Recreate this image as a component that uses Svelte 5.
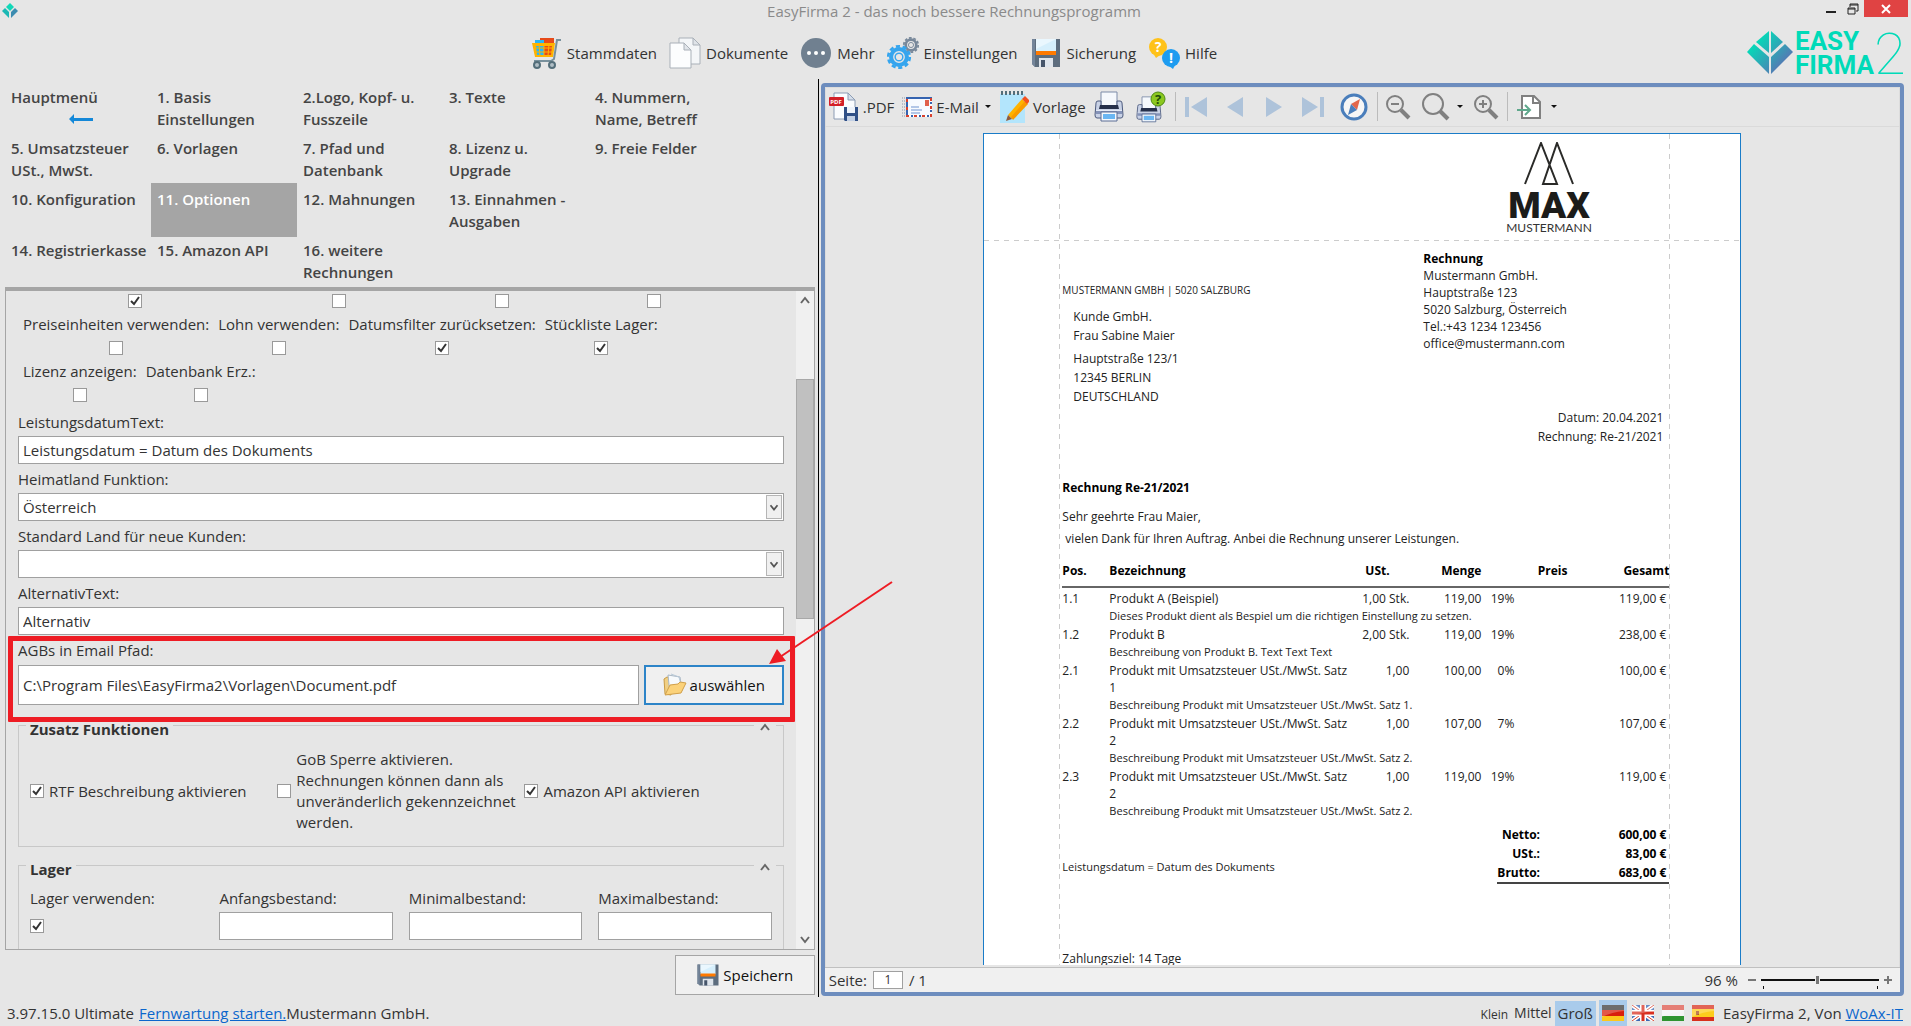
<script lang="ts">
  type Option = { label: string; checked: boolean };
  type Position = {
    pos: string;
    name: string;
    note: string;
    amount: string;
    price: string;
    tax: string;
    total: string;
  };

  const mainMenu = [
    { label: 'Stammdaten', icon: 'cart' },
    { label: 'Dokumente', icon: 'documents' },
    { label: 'Mehr', icon: 'more' },
    { label: 'Einstellungen', icon: 'gears' },
    { label: 'Sicherung', icon: 'floppy' },
    { label: 'Hilfe', icon: 'help' },
  ];

  const sections = [
    'Hauptmenü',
    '1. Basis Einstellungen',
    '2.Logo, Kopf- u. Fusszeile',
    '3. Texte',
    '4. Nummern, Name, Betreff',
    '5. Umsatzsteuer USt., MwSt.',
    '6. Vorlagen',
    '7. Pfad und Datenbank',
    '8. Lizenz u. Upgrade',
    '9. Freie Felder',
    '10. Konfiguration',
    '11. Optionen',
    '12. Mahnungen',
    '13. Einnahmen - Ausgaben',
    '',
    '14. Registrierkasse',
    '15. Amazon API',
    '16. weitere Rechnungen',
  ];

  let activeSection = '11. Optionen';

  let topChecks = [true, false, false, false];

  let optionRows: Option[][] = [
    [
      { label: 'Preiseinheiten verwenden:', checked: false },
      { label: 'Lohn verwenden:', checked: false },
      { label: 'Datumsfilter zurücksetzen:', checked: true },
      { label: 'Stückliste Lager:', checked: true },
    ],
    [
      { label: 'Lizenz anzeigen:', checked: false },
      { label: 'Datenbank Erz.:', checked: false },
    ],
  ];

  let extras: Option[] = [
    { label: 'RTF Beschreibung aktivieren', checked: true },
    {
      label:
        'GoB Sperre aktivieren. Rechnungen können dann als unveränderlich gekennzeichnet werden.',
      checked: false,
    },
    { label: 'Amazon API aktivieren', checked: true },
  ];

  const stockFields = ['Anfangsbestand:', 'Minimalbestand:', 'Maximalbestand:'];
  let stockEnabled = true;

  let serviceDateText = 'Leistungsdatum = Datum des Dokuments';
  let homeCountry = 'Österreich';
  let defaultCountry = '';
  let alternativeText = 'Alternativ';
  let termsPath = 'C:\\Program Files\\EasyFirma2\\Vorlagen\\Document.pdf';

  const positions: Position[] = [
    {
      pos: '1.1',
      name: 'Produkt A (Beispiel)',
      note: 'Dieses Produkt dient als Bespiel um die richtigen Einstellung zu setzen.',
      amount: '1,00 Stk.',
      price: '119,00',
      tax: '19%',
      total: '119,00 €',
    },
    {
      pos: '1.2',
      name: 'Produkt B',
      note: 'Beschreibung von Produkt B. Text Text Text',
      amount: '2,00 Stk.',
      price: '119,00',
      tax: '19%',
      total: '238,00 €',
    },
    {
      pos: '2.1',
      name: 'Produkt mit Umsatzsteuer USt./MwSt. Satz 1',
      note: 'Beschreibung Produkt mit Umsatzsteuer USt./MwSt. Satz 1.',
      amount: '1,00',
      price: '100,00',
      tax: '0%',
      total: '100,00 €',
    },
    {
      pos: '2.2',
      name: 'Produkt mit Umsatzsteuer USt./MwSt. Satz 2',
      note: 'Beschreibung Produkt mit Umsatzsteuer USt./MwSt. Satz 2.',
      amount: '1,00',
      price: '107,00',
      tax: '7%',
      total: '107,00 €',
    },
    {
      pos: '2.3',
      name: 'Produkt mit Umsatzsteuer USt./MwSt. Satz 2',
      note: 'Beschreibung Produkt mit Umsatzsteuer USt./MwSt. Satz 2.',
      amount: '1,00',
      price: '119,00',
      tax: '19%',
      total: '119,00 €',
    },
  ];

  const textSizes = ['Klein', 'Mittel', 'Groß'];
  let textSize = 'Groß';

  const languages = ['Deutsch', 'English', 'Magyar', 'Español'];
  let language = 'Deutsch';

  let page = '1';
  let zoom = 96;
</script>

{#snippet floppy()}
  <path d="M2 2h28v28H5l-3-3z" fill="#5d6d7e" />
  <path d="M2 2h3v28l-3-3z" fill="#74859a" />
  <path d="M6 2h20v13H6z" fill="#d6effc" />
  <path d="M6 2h20L6 12z" fill="#eaf7fe" />
  <path d="M6 14h20v4H6z" fill="#ff7a00" />
  <path d="M9 21h14v9H9z" fill="#dfe5ec" />
  <path d="M11 23h4v7h-4z" fill="#46556a" />
{/snippet}

{#snippet gear(cx: number, cy: number, r: number, color: string)}
  <g fill="none" stroke={color}>
    <circle {cx} {cy} r={r * 0.66} stroke-width={r * 0.34} />
    <circle {cx} {cy} r={r * 0.9} stroke-width={r * 0.22} stroke-dasharray="{r * 0.34} {r * 0.225}" />
    <circle {cx} {cy} r={r * 0.32} stroke-width={r * 0.12} />
  </g>
{/snippet}

{#snippet printer()}
  <path d="M7 1h16v14H7z" fill="#f5f8fc" stroke="#7c8ba8" />
  <path d="M2 12q0-2 2-2h3v5h16v-5h3q2 0 2 2l1 12q0 3-2 3H3q-2 0-2-3z" fill="#c9d2e6" stroke="#4d5b7e" />
  <path d="M6 14h18l1 4H5z" fill="#252f4a" />
  <path d="M2 19h26v4H2z" fill="#8593b8" />
  <path d="M2 19h26v1H2z" fill="#e4eaf6" />
  <path d="M7 21h16v9H7z" fill="#f5f8fc" stroke="#5a6d94" />
  <path d="M9 23h12v5H9z" fill="#6ab6f2" />
{/snippet}

<div class="app">
  <header class="titleBar">
    <svg class="appIcon" viewBox="0 0 16 16" aria-hidden="true">
      <path d="M8 0l4 4-4 4-4-4z" fill="#10d8b8" />
      <path d="M3 5l4 4v6L0 8z" fill="#1cb8b4" />
      <path d="M13 5l3 3-7 7V9z" fill="#3c8cb0" />
    </svg>
    <h1>EasyFirma 2 - das noch bessere Rechnungsprogramm</h1>
    <div class="windowButtons">
      <button aria-label="Minimieren">
        <svg viewBox="0 0 12 12"><path d="M1 9h10" stroke="#222" stroke-width="2" /></svg>
      </button>
      <button aria-label="Wiederherstellen">
        <svg viewBox="0 0 12 12" fill="none" stroke="#222">
          <path d="M1 5h7v6H1z" /><path d="M1 6h7" /><path d="M3 4V1h8v7H9M3 2h8" />
        </svg>
      </button>
      <button class="close" aria-label="Schließen">
        <svg viewBox="0 0 12 12"><path d="M2 2l8 8M10 2l-8 8" stroke="#fff" stroke-width="2" /></svg>
      </button>
    </div>
  </header>

  <div class="topBar">
    <nav class="mainMenu">
      {#each mainMenu as item}
        <button>
          <svg viewBox="0 0 32 32" aria-hidden="true">
            {#if item.icon === 'cart'}
              <path d="M10 1h14v6H10z" fill="#e64a19" />
              <path d="M5 3h9v6H5z" fill="#29b6f6" />
              <path d="M2 6h23l-2 14H5z" fill="#ffb300" />
              <path d="M6 9h8v9H7z" fill="#29b6f6" />
              <path d="M14 9h8l-1 9h-7z" fill="#e64a19" />
              <path d="M4 11h20M5 15h18M9 7l1 12M14 7v12M19 7l-1 12" stroke="#ffb300" stroke-width="1" />
              <path d="M31 3h-4l-3 19-3 2H4" fill="none" stroke="#78909c" stroke-width="2" />
              <circle cx="7" cy="28" r="3" fill="#b0bec5" stroke="#546e7a" stroke-width="2" />
              <circle cx="22" cy="28" r="3" fill="#b0bec5" stroke="#546e7a" stroke-width="2" />
            {:else if item.icon === 'documents'}
              <path d="M10 1h14l7 7v19H10z" fill="#f4f6f8" stroke="#a9b0b8" />
              <path d="M24 1l7 7h-7z" fill="#dfe3e8" stroke="#a9b0b8" />
              <path d="M1 6h14l7 7v18H1z" fill="#fcfdfe" stroke="#a9b0b8" />
              <path d="M15 6l7 7h-7z" fill="#e1e5ea" stroke="#a9b0b8" />
            {:else if item.icon === 'more'}
              <circle cx="16" cy="16" r="15" fill="#708090" />
              <circle cx="9" cy="16" r="2" fill="#fff" />
              <circle cx="16" cy="16" r="2" fill="#fff" />
              <circle cx="23" cy="16" r="2" fill="#fff" />
            {:else if item.icon === 'gears'}
              {@render gear(24, 8, 8, '#78889a')}
              {@render gear(12, 20, 12, '#35a5ee')}
            {:else if item.icon === 'floppy'}
              {@render floppy()}
            {:else}
              <circle cx="10" cy="10" r="9" fill="#ffc21a" />
              <path d="M5 16l3 5 4-3z" fill="#ffc21a" />
              <text x="10" y="15" text-anchor="middle" font-size="14" font-weight="700" fill="#fff">?</text>
              <circle cx="23" cy="21" r="9" fill="#1e9cf0" />
              <path d="M21 29l4 3 2-4z" fill="#1e9cf0" />
              <text x="23" y="26" text-anchor="middle" font-size="14" font-weight="700" fill="#fff">!</text>
            {/if}
          </svg>
          {item.label}
        </button>
      {/each}
    </nav>

    <svg class="brand" viewBox="0 0 162 48" role="img" aria-label="Easy Firma 2">
      <defs>
        <linearGradient id="brandFill" gradientUnits="userSpaceOnUse" x1="8" y1="10" x2="36" y2="36">
          <stop offset="0" stop-color="#00e0b8" />
          <stop offset="1" stop-color="#5578b4" />
        </linearGradient>
      </defs>
      <g fill="url(#brandFill)">
        <path d="M22 2v22L9 13z" />
        <path d="M24 2l12 11-12 11z" />
        <path d="M7 15l15 13v17L0 23z" />
        <path d="M38 15l8 8-22 22V28z" />
      </g>
      <text class="brandName" x="48" y="21">EASY</text>
      <text class="brandName" x="48" y="45">FIRMA</text>
      <text class="brandTwo" x="127" y="45">2</text>
    </svg>
  </div>

  <main>
    <div class="editor">
      <nav class="sections">
        {#each sections as section}
          {#if section}
            <button class:active={section === activeSection} on:click={() => (activeSection = section)}>
              {section}
              {#if section === 'Hauptmenü'}
                <svg class="back" viewBox="0 0 24 10" aria-hidden="true">
                  <path d="M0 5l5-5v4h19v3H5v3z" fill="#1488d8" />
                </svg>
              {/if}
            </button>
          {:else}
            <span></span>
          {/if}
        {/each}
      </nav>

      <div class="formPanel">
        <div class="form">
          <div class="topOptions">
            {#each topChecks as checked, i}
              <input type="checkbox" aria-label="Option {i + 1}" bind:checked />
            {/each}
          </div>
          {#each optionRows as row}
            <div class="optionRow">
              {#each row as option}
                <label>{option.label}<input type="checkbox" bind:checked={option.checked} /></label>
              {/each}
            </div>
          {/each}

          <div class="fields">
            <label for="serviceDate">LeistungsdatumText:</label>
            <input id="serviceDate" type="text" bind:value={serviceDateText} />

            <label for="homeCountry">Heimatland Funktion:</label>
            <div class="selectBox">
              <select id="homeCountry" bind:value={homeCountry}>
                <option>Österreich</option>
                <option>Deutschland</option>
              </select>
              <svg viewBox="0 0 16 24" aria-hidden="true"><path d="M4 10l4 5 4-5" /></svg>
            </div>

            <label for="defaultCountry">Standard Land für neue Kunden:</label>
            <div class="selectBox">
              <select id="defaultCountry" bind:value={defaultCountry}>
                <option value=""></option>
                <option>Österreich</option>
                <option>Deutschland</option>
              </select>
              <svg viewBox="0 0 16 24" aria-hidden="true"><path d="M4 10l4 5 4-5" /></svg>
            </div>

            <label for="alternative">AlternativText:</label>
            <input id="alternative" type="text" bind:value={alternativeText} />
          </div>

          <div class="fields terms">
            <label for="termsPath">AGBs in Email Pfad:</label>
            <div class="pathRow">
              <input id="termsPath" type="text" bind:value={termsPath} />
              <button class="choose">
                <svg viewBox="0 0 24 24" aria-hidden="true">
                  <path d="M1 6l3-2 4 1v17l-6-1z" fill="#f0cf83" stroke="#c99b45" />
                  <path d="M5 2l12 2 2 14-12 3z" fill="#f7fafc" stroke="#a9b7c4" />
                  <path d="M8 1l8 3 3 12" fill="none" stroke="#b8c9d8" />
                  <path d="M2 22l5-10 8-1 2-2 6 1-5 10z" fill="#fbd27a" stroke="#d1a04a" />
                </svg>
                auswählen
              </button>
            </div>
          </div>

          <section class="group">
            <header>
              <h2>Zusatz Funktionen</h2>
              <button aria-label="Zusatz Funktionen einklappen">
                <svg viewBox="0 0 10 8"><path d="M1 7l4-5 4 5" /></svg>
              </button>
            </header>
            <div class="extras">
              {#each extras as extra}
                <label><input type="checkbox" bind:checked={extra.checked} /><span>{extra.label}</span></label>
              {/each}
            </div>
          </section>

          <section class="group">
            <header>
              <h2>Lager</h2>
              <button aria-label="Lager einklappen">
                <svg viewBox="0 0 10 8"><path d="M1 7l4-5 4 5" /></svg>
              </button>
            </header>
            <div class="stock">
              <label class="stockToggle">Lager verwenden:<input type="checkbox" bind:checked={stockEnabled} /></label>
              {#each stockFields as field}
                <label>{field}<input type="text" /></label>
              {/each}
            </div>
          </section>
        </div>

        <div class="scrollbar" aria-hidden="true">
          <svg viewBox="0 0 10 8"><path d="M1 7l4-5 4 5" /></svg>
          <div class="track"><div class="thumb"></div></div>
          <svg viewBox="0 0 10 8"><path d="M1 1l4 5 4-5" /></svg>
        </div>
      </div>

      <button class="save">
        <svg viewBox="0 0 32 32" aria-hidden="true">{@render floppy()}</svg>
        Speichern
      </button>

      <svg class="pointer" viewBox="0 0 126 86" aria-hidden="true">
        <path d="M124 1L12 76" stroke="#ee1c24" stroke-width="2" />
        <path d="M1 83l8-15 9 12z" fill="#ee1c24" />
      </svg>
    </div>

    <div class="viewer">
      <div class="viewerTools">
        <button>
          <svg class="icon" viewBox="0 0 30 30" aria-hidden="true">
            <path d="M5 1h14l7 7v19H5z" fill="#fafcfe" stroke="#8c9cb4" />
            <path d="M19 1l7 7h-7z" fill="#d5deea" stroke="#8c9cb4" />
            <rect x="0" y="5" width="15" height="9" rx="1" fill="#d32028" />
            <text x="7" y="12" text-anchor="middle" font-size="6" font-weight="700" fill="#fff">PDF</text>
            <path d="M15 15h14v14H16l-1-1z" fill="#2f4f86" />
            <path d="M18 15h8v6h-8z" fill="#eef3fa" />
            <path d="M18 24h8v5h-8z" fill="#c3d0e4" />
          </svg>
          .PDF
        </button>
        <button>
          <svg class="icon" viewBox="0 0 30 30" aria-hidden="true">
            <path d="M0 6h4M0 9h4M0 12h4M0 15h4M0 18h4M0 21h4M0 24h4" stroke="#8a94a8" stroke-dasharray="1 1" />
            <path d="M5 6h24v18H5z" fill="#f7faff" stroke="#3564b0" stroke-width="2" />
            <path d="M29 6v18H5" fill="none" stroke="#fff" stroke-width="2" />
            <path d="M29 6v18H5V6" fill="none" stroke="#d9402c" stroke-width="2" stroke-dasharray="3 5" />
            <path d="M29 6v18H5V6" fill="none" stroke="#3564b0" stroke-width="2" stroke-dasharray="2 6" stroke-dashoffset="4" />
            <path d="M9 15h8M9 18h11M9 21h9" stroke="#6f93cf" />
            <path d="M23 8h4v6h-4z" fill="#e0604c" />
          </svg>
          E-Mail <i class="caret"></i>
        </button>
        <button>
          <svg class="icon" viewBox="0 0 30 32" aria-hidden="true">
            <path d="M1 3h25v29H1z" fill="#b3e5fc" />
            <path d="M3 0v4M7 0v4M11 0v4M15 0v4M19 0v4M23 0v4" stroke="#546e7a" stroke-width="2" />
            <path d="M9 24L23 8l5 5-15 15z" fill="#ffb300" />
            <path d="M12 26L26 10l3 3-15 16z" fill="#f99b00" />
            <path d="M23 8l3-3 5 5-3 3z" fill="#f4511e" />
            <path d="M9 24l4 4-6 2z" fill="#8d5b3f" />
          </svg>
          Vorlage
        </button>
        <div class="printTools">
          <button aria-label="Drucken"><svg class="icon" viewBox="0 0 30 32">{@render printer()}</svg></button>
          <button aria-label="Druckdialog">
            <svg class="icon" viewBox="0 0 30 32">
              <g transform="translate(0 5) scale(0.86)">{@render printer()}</g>
              <circle cx="22" cy="8" r="7" fill="#8cc820" stroke="#4d8a12" />
              <text x="22" y="13" text-anchor="middle" font-size="13" font-weight="700" fill="#1f4d08">?</text>
            </svg>
          </button>
        </div>
        <i class="divider"></i>
        <div class="pager">
          <button aria-label="Erste Seite">
            <svg viewBox="0 0 24 20"><path d="M1 0h4v20H1zM23 0v20L7 10z" /></svg>
          </button>
          <button aria-label="Vorherige Seite">
            <svg viewBox="0 0 24 20"><path d="M20 0v20L4 10z" /></svg>
          </button>
          <button aria-label="Nächste Seite">
            <svg viewBox="0 0 24 20"><path d="M4 0v20l16-10z" /></svg>
          </button>
          <button aria-label="Letzte Seite">
            <svg viewBox="0 0 24 20"><path d="M19 0h4v20h-4zM1 0v20l16-10z" /></svg>
          </button>
        </div>
        <button aria-label="Navigation">
          <svg class="icon" viewBox="0 0 30 30">
            <circle cx="15" cy="15" r="12" fill="#f6f6f6" stroke="#4a7ebb" stroke-width="3" />
            <path d="M21 7l-3 11-6-6z" fill="#e2664a" />
            <path d="M9 23l3-11 6 6z" fill="#4a7ebb" />
          </svg>
        </button>
        <i class="divider"></i>
        <div class="zoomTools">
          <button aria-label="Verkleinern">
            <svg class="icon" viewBox="0 0 30 30">
              <circle cx="12" cy="12" r="8" /><path d="M8 12h8" stroke-width="2" /><path d="M18 18l8 8" stroke-width="4" />
            </svg>
          </button>
          <button aria-label="Zoom">
            <svg class="icon" viewBox="0 0 30 30">
              <circle cx="12" cy="12" r="10" /><path d="M19 19l8 8" stroke-width="4" />
            </svg>
            <i class="caret"></i>
          </button>
          <button aria-label="Vergrößern">
            <svg class="icon" viewBox="0 0 30 30">
              <circle cx="12" cy="12" r="8" /><path d="M8 12h8M12 8v8" stroke-width="2" /><path d="M18 18l8 8" stroke-width="4" />
            </svg>
          </button>
        </div>
        <i class="divider"></i>
        <button class="export" aria-label="Export">
          <svg class="icon" viewBox="0 0 30 30" fill="none">
            <path d="M7 4h12l6 6v16H7z" fill="#fff" stroke="#808080" stroke-width="2" />
            <path d="M18 4v7h7" stroke="#808080" stroke-width="2" />
            <path d="M2 18h12M10 13l5 5-5 5" stroke="#5fa88c" stroke-width="2" />
          </svg>
          <i class="caret"></i>
        </button>
      </div>

      <div class="canvas">
        <article class="paper">
          <div class="letterhead">
            <svg viewBox="0 0 88 96" role="img" aria-label="MAX Mustermann">
              <path d="M20 42L36 1l16 41H38L52 1l16 41" fill="none" stroke="#2a2a28" stroke-width="2" />
              <text class="logoMax" x="44" y="76" text-anchor="middle">MAX</text>
              <text class="logoName" x="44" y="90" text-anchor="middle">MUSTERMANN</text>
            </svg>
          </div>

          <div class="addresses">
            <div>
              <p class="sender">MUSTERMANN GMBH | 5020 SALZBURG</p>
              <p class="recipient">Kunde GmbH.<br />Frau Sabine Maier</p>
              <p class="recipient street">Hauptstraße 123/1<br />12345 BERLIN<br />DEUTSCHLAND</p>
            </div>
            <p class="company">
              <strong>Rechnung</strong><br />Mustermann GmbH.<br />Hauptstraße 123<br />5020 Salzburg, Österreich<br
              />Tel.:+43 1234 123456<br />office@mustermann.com
            </p>
          </div>

          <p class="dates">Datum: 20.04.2021<br />Rechnung: Re-21/2021</p>
          <h3>Rechnung Re-21/2021</h3>
          <p class="greeting">Sehr geehrte Frau Maier,</p>
          <p class="intro">vielen Dank für Ihren Auftrag. Anbei die Rechnung unserer Leistungen.</p>

          <table class="positions">
            <thead>
              <tr>
                <th class="pos">Pos.</th>
                <th class="name">Bezeichnung</th>
                <th class="amount">USt.</th>
                <th class="price">Menge</th>
                <th class="tax"></th>
                <th class="unit">Preis</th>
                <th class="total">Gesamt</th>
              </tr>
            </thead>
            <tbody>
              {#each positions as item}
                <tr>
                  <td class="left">{item.pos}</td>
                  <td class="left">{item.name}</td>
                  <td>{item.amount}</td>
                  <td>{item.price}</td>
                  <td>{item.tax}</td>
                  <td></td>
                  <td class="sum">{item.total}</td>
                </tr>
                <tr class="note">
                  <td></td>
                  <td class="left" colspan="6">{item.note}</td>
                </tr>
              {/each}
            </tbody>
          </table>

          <div class="summary">
            <p>Leistungsdatum = Datum des Dokuments</p>
            <table>
              <tbody>
                <tr><th>Netto:</th><td class="sum">600,00 €</td></tr>
                <tr><th>USt.:</th><td class="sum">83,00 €</td></tr>
                <tr><th>Brutto:</th><td class="sum">683,00 €</td></tr>
              </tbody>
            </table>
          </div>
          <p class="payment">Zahlungsziel: 14 Tage</p>
        </article>
      </div>

      <div class="viewerStatus">
        <label for="page">Seite:</label>
        <input id="page" type="text" bind:value={page} />
        <span>/ 1</span>
        <div class="zoomControl">
          <output>{zoom} %</output>
          <button aria-label="Zoom verringern" on:click={() => (zoom -= 1)}>
            <svg viewBox="0 0 8 8"><path d="M0 4h8" stroke="#777" stroke-width="2" /></svg>
          </button>
          <input type="range" min="10" max="190" aria-label="Zoomstufe" bind:value={zoom} />
          <button aria-label="Zoom erhöhen" on:click={() => (zoom += 1)}>
            <svg viewBox="0 0 8 8"><path d="M0 4h8M4 0v8" stroke="#777" stroke-width="2" /></svg>
          </button>
        </div>
      </div>
    </div>
  </main>

  <footer>
    <span class="version">3.97.15.0 Ultimate</span>
    <a href="#fernwartung">Fernwartung starten.</a>
    <span>Mustermann GmbH.</span>
    <div class="sizes">
      {#each textSizes as size}
        <button class={size} class:selected={size === textSize} on:click={() => (textSize = size)}>{size}</button>
      {/each}
    </div>
    <div class="languages">
      {#each languages as lang}
        <button aria-label={lang} class:selected={lang === language} on:click={() => (language = lang)}>
          <svg viewBox="0 0 22 16" aria-hidden="true">
            {#if lang === 'Deutsch'}
              <path d="M0 0h22v6H0z" fill="#3c3c3c" />
              <path d="M0 5h22v6H0z" fill="#d8200c" />
              <path d="M0 11h22v5H0z" fill="#fcc81c" />
            {:else if lang === 'English'}
              <path d="M0 0h22v16H0z" fill="#3b68b4" />
              <path d="M0 0l22 16M22 0L0 16" stroke="#fff" stroke-width="4" />
              <path d="M0 0l22 16M22 0L0 16" stroke="#d8402c" stroke-width="1" />
              <path d="M11 0v16M0 8h22" stroke="#fff" stroke-width="6" />
              <path d="M11 0v16M0 8h22" stroke="#d83020" stroke-width="3" />
            {:else if lang === 'Magyar'}
              <path d="M0 0h22v5H0z" fill="#dc5448" />
              <path d="M0 5h22v6H0z" fill="#f4f4f4" />
              <path d="M0 11h22v5H0z" fill="#2f9430" />
            {:else}
              <path d="M0 0h22v16H0z" fill="#d8301c" />
              <path d="M0 4h22v8H0z" fill="#fccc1c" />
              <path d="M4 6h3v4H4z" fill="#a8501c" />
            {/if}
            <path d="M0 0h22v6Q10 7 0 12z" fill="#fff" opacity="0.25" />
          </svg>
        </button>
      {/each}
    </div>
    <span>EasyFirma 2, Von <a href="#woax">WoAx-IT</a></span>
  </footer>
</div>

<style>
  :global(body) {
    background: #e6e6e6;
  }

  .app {
    display: flex;
    flex-direction: column;
    height: 100vh;
    overflow: hidden;
    color: #333;
    background: #e6e6e6;
    font-family: 'Open Sans', 'Noto Sans', sans-serif;
    font-size: 15px;
    line-height: 22px;
  }

  .app * {
    box-sizing: border-box;
  }

  button {
    display: flex;
    align-items: center;
    padding: 0;
    border: 0;
    background: none;
    color: inherit;
    font: inherit;
    text-align: left;
  }

  input,
  select {
    margin: 0;
    font: inherit;
    color: inherit;
  }

  svg {
    display: block;
    flex: none;
  }

  p,
  h1,
  h2,
  h3 {
    margin: 0;
  }

  a {
    color: #0b66cc;
  }

  input[type='text'],
  select {
    width: 100%;
    height: 28px;
    padding: 0 4px;
    border: 1px solid #a0a0a0;
    border-radius: 0;
    background: #fff;
  }

  input[type='checkbox'] {
    appearance: none;
    flex: none;
    width: 14px;
    height: 14px;
    border: 1px solid #999;
    background: #fff;
  }

  input[type='checkbox']:checked {
    background: #fff
      url("data:image/svg+xml,%3Csvg xmlns='http://www.w3.org/2000/svg' viewBox='0 0 12 12'%3E%3Cpath d='M2 6l3 3 5-7' fill='none' stroke='%23333' stroke-width='2'/%3E%3C/svg%3E");
  }

  /* window frame */
  .titleBar {
    display: grid;
    grid-template-columns: 1fr auto 1fr;
    align-items: center;
    height: 20px;
    padding-right: 3px;
  }

  .appIcon {
    width: 16px;
    height: 16px;
    margin-left: 2px;
  }

  h1 {
    color: #8a8a8a;
    font-size: 15px;
    font-weight: 400;
  }

  .windowButtons {
    display: flex;
    justify-content: flex-end;
    align-self: start;
  }

  .windowButtons button {
    justify-content: center;
    width: 22px;
    height: 17px;
  }

  .windowButtons svg {
    width: 12px;
    height: 12px;
  }

  .windowButtons .close {
    width: 44px;
    background: #e04343;
  }

  .topBar {
    display: flex;
    align-items: center;
    height: 59px;
    padding: 7px 2px 0 0;
  }

  .mainMenu {
    display: flex;
    justify-content: center;
    flex: 1;
    gap: 12px;
  }

  .mainMenu button {
    gap: 5px;
  }

  .mainMenu svg {
    width: 32px;
    height: 32px;
  }

  .brand {
    width: 162px;
    height: 48px;
  }

  .brandName {
    fill: #00dab8;
    font: 700 26px Roboto, sans-serif;
  }

  .brandTwo {
    fill: #00dab8;
    font: 100 58px Roboto, sans-serif;
  }

  main {
    display: flex;
    flex: 1;
    min-height: 0;
    padding-right: 7px;
  }

  /* settings */
  .editor {
    position: relative;
    display: flex;
    flex-direction: column;
    flex: 0 0 43%;
    min-width: 0;
    padding: 2px 3px 2px 5px;
    border-right: 1px solid #000;
  }

  .sections {
    display: grid;
    grid-template-columns: repeat(5, minmax(0, 146px));
    grid-auto-rows: 51px;
    margin-bottom: 2px;
    font-weight: 600;
  }

  .sections button {
    flex-direction: column;
    align-items: flex-start;
    height: 54px;
    padding: 5px 0 0 6px;
    color: #444;
    font-weight: 600;
  }

  .sections .active {
    background: #a5a5a5;
    color: #fff;
  }

  .back {
    align-self: center;
    width: 24px;
    height: 10px;
    margin-top: 6px;
  }

  .formPanel {
    display: flex;
    flex: 1;
    min-height: 0;
    border: 1px solid #a5a5a5;
    border-top-width: 4px;
  }

  .form {
    flex: 1;
    min-width: 0;
    overflow: hidden;
    padding: 3px 12px 0;
  }

  .topOptions {
    display: grid;
    grid-template-columns: 224px 164px 142px 142px;
    gap: 10px;
    justify-items: center;
    padding: 0 5px 5px;
  }

  .optionRow {
    display: flex;
    gap: 9px;
    padding: 0 5px 5px;
  }

  .optionRow label {
    display: flex;
    flex-direction: column;
    align-items: center;
    gap: 6px;
  }

  .fields label {
    display: block;
    height: 29px;
    padding-top: 4px;
    line-height: 22px;
  }

  .fields > input {
    display: block;
  }

  .selectBox {
    position: relative;
  }

  select {
    display: block;
    appearance: none;
  }

  .selectBox svg {
    position: absolute;
    top: 2px;
    right: 2px;
    width: 16px;
    height: 24px;
    border: 1px solid #b5b5b5;
    background: #f0f0f0;
    fill: none;
    stroke: #555;
    stroke-width: 2;
    pointer-events: none;
  }

  .terms {
    position: relative;
    margin-bottom: 20px;
  }

  /* red marker around the path field */
  .terms::after {
    content: '';
    position: absolute;
    inset: 1px -11px -17px -10px;
    border: 5px solid #ee1c24;
    border-radius: 1px;
    pointer-events: none;
  }

  .pathRow {
    display: flex;
    gap: 5px;
    padding-top: 1px;
  }

  .pathRow input {
    flex: 1;
    height: 40px;
  }

  .choose,
  .save {
    justify-content: center;
    gap: 3px;
    width: 140px;
    height: 40px;
    border: 1px solid #a5a5a5;
    background: #f0f0f0;
    color: #111;
  }

  .choose {
    border: 2px solid #2c84c8;
  }

  .choose svg,
  .save svg {
    width: 24px;
    height: 24px;
  }

  .pointer {
    position: absolute;
    top: 502px;
    right: -76px;
    z-index: 1;
    width: 126px;
    height: 86px;
    pointer-events: none;
  }

  .group {
    margin-bottom: 18px;
    padding: 0 11px 13px;
    border: 1px solid #c8c8c8;
  }

  .group header {
    display: flex;
    justify-content: space-between;
    height: 22px;
    margin: -8px -4px 9px;
  }

  .group h2 {
    padding: 0 4px;
    background: #e6e6e6;
    font-size: 15px;
    font-weight: 700;
    line-height: 22px;
  }

  .group header button {
    justify-content: center;
    width: 22px;
    height: 18px;
    background: #e6e6e6;
  }

  .group header svg,
  .scrollbar svg {
    width: 10px;
    height: 8px;
    fill: none;
    stroke: #666;
    stroke-width: 2;
  }

  .extras {
    display: grid;
    grid-template-columns: repeat(3, 1fr);
    line-height: 21px;
  }

  .extras label {
    display: flex;
    align-items: center;
    gap: 5px;
  }

  .stock {
    display: grid;
    grid-template-columns: repeat(4, 1fr);
    gap: 16px;
    margin-top: -6px;
  }

  .stock label {
    display: grid;
    grid-template-rows: 29px 28px;
    line-height: 30px;
  }

  .stockToggle {
    align-items: center;
  }

  .scrollbar {
    display: flex;
    flex-direction: column;
    align-items: center;
    width: 18px;
    padding: 5px 0;
    background: #f0f0f0;
  }

  .track {
    flex: 1;
    width: 100%;
    padding-top: 75px;
  }

  .thumb {
    height: 43%;
    border: 1px solid #a8a8a8;
    background: #c0c0c0;
  }

  .save {
    align-self: flex-end;
    margin-top: 5px;
  }

  /* preview */
  .viewer {
    display: flex;
    flex-direction: column;
    flex: 1;
    min-width: 0;
    margin: 4px 0 1px 2px;
    border: 4px solid #6d8dbe;
    border-radius: 4px;
    box-shadow: inset 0 0 0 1px #dcdcdc;
  }

  .viewerTools {
    display: flex;
    align-items: center;
    height: 40px;
    padding-left: 4px;
    border-bottom: 1px solid #dadada;
  }

  .viewerTools > button {
    margin-right: 8px;
  }

  .viewerTools button {
    gap: 4px;
  }

  .icon {
    width: 30px;
    height: 32px;
  }

  .caret {
    margin-left: 2px;
    border: 3px solid transparent;
    border-top-color: #111;
    border-bottom-width: 0;
  }

  .divider {
    width: 1px;
    height: 29px;
    background: #bbb;
  }

  .printTools {
    display: flex;
    gap: 12px;
    margin-right: 9px;
  }

  .pager {
    display: flex;
    gap: 15px;
    margin: 0 14px 0 8px;
  }

  .pager svg {
    width: 24px;
    height: 20px;
    fill: #aec3da;
  }

  .zoomTools {
    display: flex;
    gap: 8px;
    margin: 0 6px 0 5px;
  }

  .zoomTools svg {
    fill: none;
    stroke: #808080;
    stroke-width: 2;
  }

  .export {
    margin-left: 7px;
  }

  .canvas {
    display: flex;
    justify-content: center;
    flex: 1;
    min-height: 0;
    padding: 6px 0 2px;
  }

  .paper {
    position: relative;
    width: 758px;
    overflow: hidden;
    padding: 0 71px 0 78px;
    border: 1px solid #1a7cc8;
    border-bottom: 0;
    background: #fff;
    color: #222;
    font-size: 12px;
    line-height: 19px;
  }

  /* print margins */
  .paper::before {
    content: '';
    position: absolute;
    inset: 0 70px 0 75px;
    background:
      repeating-linear-gradient(#ccc 0 5px, transparent 5px 10px) left / 1px 100% no-repeat,
      repeating-linear-gradient(#ccc 0 5px, transparent 5px 10px) right / 1px 100% no-repeat;
  }

  .paper::after {
    content: '';
    position: absolute;
    top: 106px;
    left: 0;
    right: 0;
    height: 1px;
    background: repeating-linear-gradient(90deg, #ccc 0 5px, transparent 5px 10px);
  }

  .letterhead {
    height: 107px;
    padding: 8px 0 0 443px;
  }

  .letterhead svg {
    width: 88px;
    height: 96px;
  }

  .logoMax {
    fill: #1c1c1a;
    font: 900 37px Roboto, sans-serif;
  }

  .logoName {
    fill: #333;
    font: 400 12px Lato, sans-serif;
  }

  .addresses {
    display: grid;
    grid-template-columns: 361px 1fr;
  }

  .sender {
    margin-top: 40px;
    font-size: 10px;
  }

  .recipient {
    margin-top: 7px;
    padding-left: 11px;
  }

  .street {
    margin-top: 4px;
  }

  .company {
    padding-top: 9px;
    line-height: 17px;
  }

  strong,
  h3 {
    color: #000;
    font-size: 12px;
    font-weight: 700;
  }

  .dates {
    margin-top: 2px;
    padding-right: 6px;
    text-align: right;
  }

  h3 {
    margin-top: 32px;
  }

  .greeting {
    margin-top: 10px;
  }

  .intro {
    margin-top: 3px;
    padding-left: 3px;
  }

  table {
    border-spacing: 0;
  }

  .positions {
    width: 100%;
    margin-top: 12px;
    table-layout: fixed;
  }

  th,
  td {
    padding: 0;
    text-align: right;
    vertical-align: top;
  }

  .positions th {
    height: 28px;
    border-bottom: 2px solid #666;
    color: #000;
    line-height: 22px;
  }

  .positions td {
    line-height: 17px;
  }

  .positions tbody tr:first-child td {
    padding-top: 2px;
  }

  .positions .left,
  .positions .pos,
  .positions .name {
    text-align: left;
  }

  .positions .note td {
    height: 19px;
    font-size: 11px;
  }

  .pos {
    width: 47px;
  }

  .name {
    width: 246px;
  }

  .positions .amount {
    width: 54px;
    padding-left: 10px;
    text-align: left;
  }

  .price {
    width: 72px;
  }

  .tax {
    width: 33px;
  }

  .unit {
    width: 53px;
  }

  .sum {
    padding-right: 3px;
  }

  .summary {
    display: flex;
    justify-content: space-between;
    margin-top: 4px;
  }

  .summary p {
    margin-top: 32px;
    font-size: 11px;
  }

  .summary table {
    width: 172px;
    border-bottom: 2px solid #444;
    color: #000;
    font-weight: 700;
  }

  .summary th {
    width: 42px;
  }

  .payment {
    margin-top: 65px;
  }

  .viewerStatus {
    display: flex;
    align-items: center;
    gap: 6px;
    height: 25px;
    padding: 0 8px 0 4px;
    border-top: 1px solid #c0c0c0;
    background: #f0f0f0;
  }

  #page {
    width: 30px;
    height: 18px;
    font-size: 12px;
    text-align: center;
  }

  .zoomControl {
    display: flex;
    align-items: center;
    gap: 5px;
    margin-left: auto;
  }

  output {
    margin-right: 5px;
  }

  .zoomControl svg {
    width: 8px;
    height: 8px;
  }

  input[type='range'] {
    appearance: none;
    width: 118px;
    height: 18px;
    background:
      linear-gradient(#111, #111) center / 100% 2px no-repeat,
      linear-gradient(#111, #111) 2px 15px / 1px 3px no-repeat,
      linear-gradient(#111, #111) 116px 15px / 1px 3px no-repeat;
  }

  input[type='range']::-webkit-slider-thumb {
    appearance: none;
    width: 5px;
    height: 8px;
    border: solid #f0f0f0;
    border-width: 0 1px;
    background: #777;
  }

  /* status bar */
  footer {
    display: flex;
    align-items: center;
    height: 29px;
    padding: 3px 8px 0 7px;
  }

  .version {
    margin-right: 5px;
  }

  .sizes {
    display: flex;
    align-items: center;
    margin-left: auto;
  }

  .sizes button {
    height: 25px;
    padding: 0 3px;
  }

  .sizes .Klein {
    padding-top: 4px;
    font-size: 12px;
  }

  .sizes .Mittel {
    font-size: 14px;
  }

  .sizes .selected,
  .languages .selected {
    background: #a9cbeb;
  }

  .languages {
    display: flex;
    gap: 2px;
    margin: 0 6px 0 3px;
  }

  .languages button {
    width: 28px;
    height: 27px;
    padding: 0 3px;
  }

  .languages svg {
    width: 22px;
    height: 16px;
  }
</style>
